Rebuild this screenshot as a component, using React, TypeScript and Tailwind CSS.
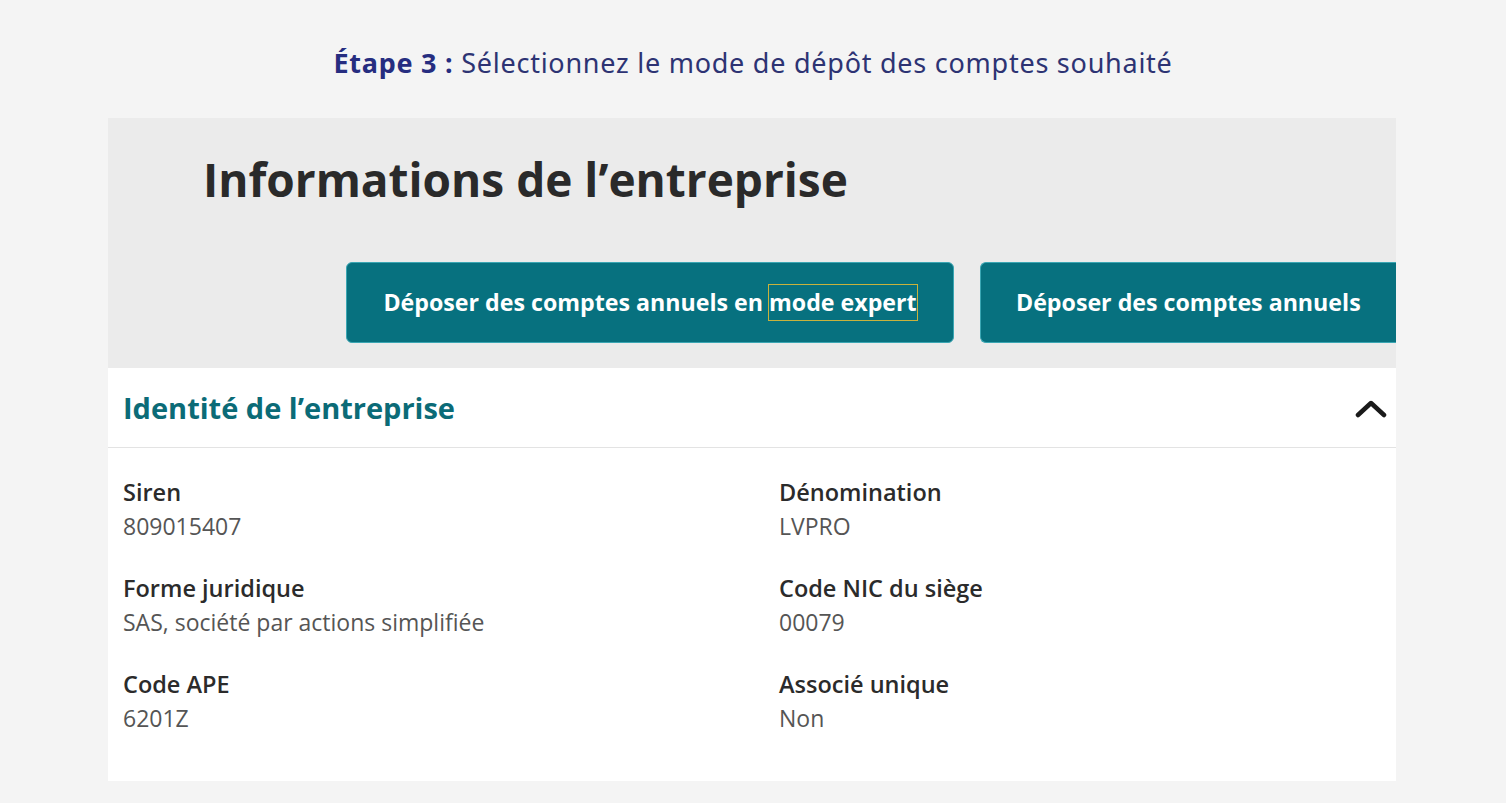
import { useState } from 'react'

const fields = [
  { label: 'Siren', value: '809015407' },
  { label: 'Dénomination', value: 'LVPRO' },
  { label: 'Forme juridique', value: 'SAS, société par actions simplifiée' },
  { label: 'Code NIC du siège', value: '00079' },
  { label: 'Code APE', value: '6201Z' },
  { label: 'Associé unique', value: 'Non' },
]

const ChevronUp = () => (
  <svg width="32" height="20" viewBox="0 0 32 20" fill="none">
    <path d="M3 17 L16 5 L29 17" stroke="#1a1a1a" strokeWidth="4.5" strokeLinecap="round" strokeLinejoin="round" />
  </svg>
)

export default function App() {
  const [open, setOpen] = useState(true)

  return (
    <div className="min-h-screen bg-[#f4f4f4] pb-[21px] font-['Open_Sans',sans-serif]">
      <h2 className="pt-[46px] pb-[38px] text-center text-[27px] leading-[34px] tracking-[0.75px] text-[#2d3373] font-['Noto_Sans',sans-serif] font-normal">
        <span className="font-bold text-[#262d80]">Étape 3 :</span> Sélectionnez le mode de dépôt des comptes souhaité
      </h2>

      <div className="ml-[108px] w-[1288px]">
        {/* header gris */}
        <div className="h-[250px] overflow-hidden bg-[#ebebeb]">
          <h1 className="pl-[95px] pt-[29px] text-[46px] font-bold leading-[64px] text-[#2a2a2a]">
            Informations de l’entreprise
          </h1>
          <div className="mt-[51px] flex justify-end gap-[26px]">
            <button className="flex h-[81px] w-[608px] shrink-0 items-center justify-center rounded-[6px] border border-[#3aa6b3] bg-[#07717f] text-[23.2px] font-bold text-white">
              Déposer des comptes annuels en&nbsp;
              <span className="outline outline-1 outline-[#c9b23c]">mode expert</span>
            </button>
            <button className="flex h-[81px] w-[416px] shrink-0 items-center justify-start rounded-l-[6px] border border-r-0 border-[#3aa6b3] bg-[#07717f] pl-[35px] text-[23.2px] font-bold text-white">
              Déposer des comptes annuels
            </button>
          </div>
        </div>

        {/* identité */}
        <div className="bg-white">
          <div
            className="flex h-[80px] cursor-pointer items-center justify-between border-b border-[#e3e3e3] pl-[15px] pr-[9px]"
            onClick={() => setOpen(!open)}
          >
            <span className="text-[29px] font-bold text-[#0b6b77]">Identité de l’entreprise</span>
            <ChevronUp />
          </div>
          {open && (
            <div className="grid grid-cols-[656px_1fr] gap-y-[28px] pl-[15px] pt-[27px] pb-[46px]">
              {fields.map((f) => (
                <div key={f.label}>
                  <p className="text-[23.5px] font-semibold leading-[34px] text-[#2b2b2b]">{f.label}</p>
                  <p className="text-[23px] leading-[34px] text-[#555555]">{f.value}</p>
                </div>
              ))}
            </div>
          )}
        </div>
      </div>
    </div>
  )
}
